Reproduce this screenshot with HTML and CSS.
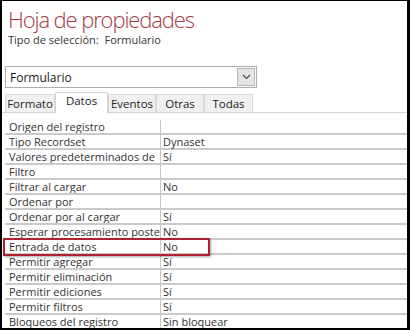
FILE: index.html
```html
<!DOCTYPE html>
<html lang="es">
<head>
  <meta charset="UTF-8">
  <title>Hoja de propiedades</title>
  <link rel="stylesheet" href="styles.css">
</head>
<body>
  <div class="sheet">
    <h1 class="title">Hoja de propiedades</h1>
    <div class="sel-type">Tipo de selección:&nbsp; Formulario</div>

    <div class="combo">
      <span class="combo-text">Formulario</span>
      <span class="combo-btn">
        <svg width="9" height="6" viewBox="0 0 9 6"><path d="M1 1 L4.5 4.5 L8 1" fill="none" stroke="#444" stroke-width="1.1"/></svg>
      </span>
    </div>

    <div class="tabs">
      <div class="tab tab-formato">Formato</div>
      <div class="tab tab-datos active">Datos</div>
      <div class="tab tab-eventos">Eventos</div>
      <div class="tab tab-otras">Otras</div>
      <div class="tab tab-todas">Todas</div>
    </div>

    <div class="grid">
      <div class="row"><div class="name">Origen del registro</div><div class="value"></div></div>
      <div class="row"><div class="name">Tipo Recordset</div><div class="value">Dynaset</div></div>
      <div class="row"><div class="name">Valores predeterminados de</div><div class="value">Sí</div></div>
      <div class="row"><div class="name">Filtro</div><div class="value"></div></div>
      <div class="row"><div class="name">Filtrar al cargar</div><div class="value">No</div></div>
      <div class="row"><div class="name">Ordenar por</div><div class="value"></div></div>
      <div class="row"><div class="name">Ordenar por al cargar</div><div class="value">Sí</div></div>
      <div class="row"><div class="name">Esperar procesamiento poste</div><div class="value">No</div></div>
      <div class="row"><div class="name">Entrada de datos</div><div class="value">No</div></div>
      <div class="row"><div class="name">Permitir agregar</div><div class="value">Sí</div></div>
      <div class="row"><div class="name">Permitir eliminación</div><div class="value">Sí</div></div>
      <div class="row"><div class="name">Permitir ediciones</div><div class="value">Sí</div></div>
      <div class="row"><div class="name">Permitir filtros</div><div class="value">Sí</div></div>
      <div class="row"><div class="name">Bloqueos del registro</div><div class="value">Sin bloquear</div></div>
    </div>

    <div class="mark"></div>
  </div>
</body>
</html>
```

FILE: styles.css
```css
* {
  margin: 0;
  padding: 0;
  box-sizing: border-box;
}
html, body {
  height: 330px;
  overflow: hidden;
}
body {
  background: #000;
  padding: 1px 3px 2px 2px;
  font-family: 'Open Sans', 'Noto Sans', sans-serif;
  color: #333;
}
.sheet {
  position: relative;
  height: 100%;
  background: #fff;
  overflow: hidden;
}
.title {
  font-weight: 300;
  font-size: 22px;
  letter-spacing: -1.1px;
  line-height: 26px;
  color: #a13a48;
  padding: 5px 0 0 6px;
}
.sel-type {
  font-size: 11px;
  line-height: 15px;
  padding-left: 6px;
  color: #333;
}
.combo {
  display: flex;
  align-items: center;
  justify-content: space-between;
  width: 252px;
  height: 22px;
  margin: 19px 0 0 3px;
  border: 1px solid #acacac;
  padding: 0 1px 0 4px;
}
.combo-text {
  font-size: 12px;
  color: #1a1a1a;
}
.combo-btn {
  display: flex;
  align-items: center;
  justify-content: center;
  width: 18px;
  height: 18px;
  background: #e4e4e4;
  border: 1px solid #b5b5b5;
}
.tabs {
  display: flex;
  align-items: flex-end;
  height: 25px;
  padding-left: 3px;
  border-bottom: 1px solid #d4d4d4;
}
.tab {
  height: 18px;
  font-size: 11.5px;
  line-height: 17px;
  text-align: center;
  background: #f0f0f0;
  border: 1px solid #dadada;
  border-bottom: none;
  color: #222;
}
.tab-formato { width: 50px; }
.tab-datos { width: 53px; }
.tab-eventos { width: 48px; }
.tab-otras { width: 48px; }
.tab-todas { width: 49px; }
.tab.active {
  height: 21px;
  background: #fff;
  line-height: 16px;
  margin-bottom: -1px;
  border-color: #d4d4d4;
}
.grid {
  margin-top: 7px;
  padding-left: 3px;
}
.row {
  display: flex;
  height: 15px;
  border-bottom: 2px solid #cacaca;
  font-size: 11px;
  line-height: 13px;
}
.name {
  width: 156px;
  padding-left: 4px;
  white-space: nowrap;
  overflow: hidden;
  border-right: 1px solid #c8c8c8;
}
.value {
  flex: 1;
  padding-left: 2px;
  white-space: nowrap;
}
.mark {
  position: absolute;
  left: 1px;
  top: 237px;
  width: 207px;
  height: 18px;
  border: 2px solid #b0212e;
  box-shadow: 1px 1px 2px rgba(0, 0, 0, 0.35);
}
```
